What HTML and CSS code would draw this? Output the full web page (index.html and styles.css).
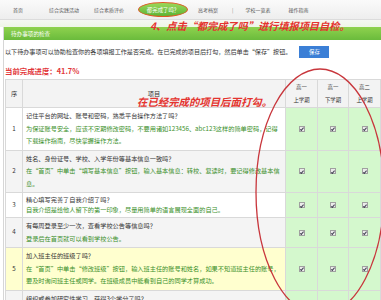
FILE: index.html
```html
<!DOCTYPE html>
<html lang="zh-CN">
<head>
<meta charset="utf-8">
<title>待办事项的检查</title>
<link rel="stylesheet" href="styles.css">
</head>
<body>
<div class="page">
  <nav class="nav">
    <a class="tab t1">首页</a>
    <a class="tab t2">综合实践活动</a>
    <a class="tab t3">综合素质评价</a>
    <a class="tab t4 active">都完成了吗？</a>
    <a class="tab t5">高考档案</a>
    <span class="tab t6">|</span>
    <a class="tab t7">学校一览表</a>
    <a class="tab t8">操作指南</a>
  </nav>
  <div class="band"></div>
  <section class="panel">
    <div class="panel-head">待办事项的检查</div>
    <div class="intro">
      <span>以下待办事项可以协助检查你的各项填报工作是否完成。在已完成的项目后打勾，然后单击“保存”按钮。</span>
      <button class="btn">保存</button>
    </div>
    <div class="progress">当前完成进度：41.7%</div>
    <table class="todo">
      <colgroup>
        <col class="c-no"><col class="c-item"><col class="c-chk"><col class="c-chk2"><col class="c-chk">
      </colgroup>
      <thead>
        <tr>
          <th>序</th>
          <th>项目</th>
          <th class="h-chk">高一<br>上学期</th>
          <th class="h-chk">高一<br>下学期</th>
          <th class="h-chk">高二<br>上学期</th>
        </tr>
      </thead>
      <tbody>
        <tr class="odd">
          <td class="no">1</td>
          <td class="item"><div class="q">记住平台的网址、账号和密码，熟悉平台操作方法了吗？</div><div class="a">为保证账号安全，应该不定期修改密码，不要用诸如123456、abc123这样的简单密码，记得<br>下载操作指南，尽快掌握操作方法。</div></td>
          <td class="chk"><span class="cb"></span></td>
          <td class="chk"><span class="cb"></span></td>
          <td class="chk"><span class="cb"></span></td>
        </tr>
        <tr class="even">
          <td class="no">2</td>
          <td class="item"><div class="q">姓名、身份证号、学校、入学年份等基本信息一致吗？</div><div class="a">在“首页”中单击“填写基本信息”按钮，输入基本信息：转校、复读时，要记得修改基本信<br>息。</div></td>
          <td class="chk"><span class="cb"></span></td>
          <td class="chk"><span class="cb"></span></td>
          <td class="chk"><span class="cb"></span></td>
        </tr>
        <tr class="odd compact">
          <td class="no">3</td>
          <td class="item"><div class="q">精心填写完善了自我介绍了吗？</div><div class="a">自我介绍是给他人留下的第一印象，尽量用简单的语言展现全面的自己。</div></td>
          <td class="chk"><span class="cb"></span></td>
          <td class="chk"><span class="cb"></span></td>
          <td class="chk"><span class="cb"></span></td>
        </tr>
        <tr class="even">
          <td class="no">4</td>
          <td class="item"><div class="q">有每周登录至少一次，查看学校公告等信息吗？</div><div class="a">登录后在首页就可以看到学校公告。</div></td>
          <td class="chk"><span class="cb"></span></td>
          <td class="chk"><span class="cb"></span></td>
          <td class="chk"><span class="cb"></span></td>
        </tr>
        <tr class="hover">
          <td class="no">5</td>
          <td class="item"><div class="q">加入班主任的班级了吗？</div><div class="a">在“首页”中单击“修改班级”按钮，输入班主任的账号和姓名，如果不知道班主任的账号，<br>要及时询问班主任或同学。在班级成员中能看到自己的同学才算成功。</div></td>
          <td class="chk"><span class="cb"></span></td>
          <td class="chk"><span class="cb"></span></td>
          <td class="chk"><span class="cb"></span></td>
        </tr>
        <tr class="even">
          <td class="no">6</td>
          <td class="item"><div class="q">组织或参加研究性学习，获得3个学分了吗？</div><div class="a">在“综合实践活动”中填写研究性学习的课题和成果。</div></td>
          <td class="chk"><span class="cb"></span></td>
          <td class="chk"><span class="cb"></span></td>
          <td class="chk"><span class="cb"></span></td>
        </tr>
      </tbody>
    </table>
  </section>
  <div class="anno anno-1">4、点击“都完成了吗”进行填报项目自检。</div>
  <div class="anno anno-2">在已经完成的项目后面打勾。</div>
  <svg class="ring" width="381" height="300" viewBox="0 0 381 300">
    <ellipse cx="320" cy="192" rx="64" ry="123" fill="none" stroke="#c8363c" stroke-width="1.3"/>
  </svg>
</div>
</body>
</html>
```

FILE: styles.css
```css
* { box-sizing: border-box; }
html, body { margin: 0; padding: 0; background: #fff; }
body { font-family: "Noto Sans CJK SC", "Noto Sans", sans-serif; color: #333; overflow: hidden; }
.page { position: relative; width: 381px; height: 300px; overflow: hidden; }

.nav {
  height: 20px;
  display: flex;
  align-items: center;
  background: linear-gradient(#fafafa, #eeeeee);
  border-bottom: 1px solid #dcdcdc;
  font-size: 5px;
  color: #555;
}
.tab { white-space: nowrap; line-height: 8px; }
.t1 { margin-left: 13px; }
.t2 { margin-left: 26px; }
.t3 { margin-left: 15px; }
.t4 {
  margin-left: 14px;
  width: 50px; height: 15px;
  display: flex; align-items: center; justify-content: center;
  border-radius: 50%;
  border: 1px solid #de5a26;
  background: linear-gradient(#9bd85a, #5cb435);
  color: #fff;
  font-size: 5.4px;
}
.t5 { margin-left: 10px; }
.t6 { margin-left: 14px; color: #888; }
.t7 { margin-left: 12px; }
.t8 { margin-left: 18px; }

.band { height: 7px; background: linear-gradient(#f6f8f3, #eef6e6); }

.panel { margin-left: 3px; border-left: 1px solid #d6d6d6; }
.panel-head {
  height: 13px;
  padding-left: 7px;
  display: flex; align-items: center;
  background: linear-gradient(#8fd24e, #6abb3c);
  color: #fff;
  font-size: 5.6px;
}
.intro {
  height: 23px;
  padding-left: 1px;
  display: flex; align-items: center;
  font-size: 6.1px;
  white-space: nowrap;
}
.btn {
  margin-left: 8px;
  width: 30px; height: 12px;
  padding: 0;
  border: 0;
  background: #3b7fd6;
  color: #fff;
  font-family: inherit;
  font-size: 5.4px;
}
.progress {
  height: 14px;
  padding-left: 1px;
  margin-bottom: 2px;
  display: flex; align-items: center;
  color: #e2373a;
  font-weight: bold;
  font-size: 7.4px;
}

.todo {
  margin-left: 1px;
  width: 375px;
  table-layout: fixed;
  border-collapse: collapse;
  font-size: 6.2px;
}
.c-no { width: 17px; }
.c-item { width: 263px; }
.c-chk { width: 32px; }
.c-chk2 { width: 31px; }
.todo th, .todo td { border: 1px solid #d9d9d9; padding: 2px 3px; }
.todo th { background: #f3f3f3; font-weight: normal; height: 28px; color: #333; }
.todo th.h-chk { font-size: 5.4px; line-height: 13px; padding: 0; }
.todo td { line-height: 12.5px; vertical-align: middle; }
.todo td.no { text-align: center; padding: 0; }
.item { white-space: nowrap; overflow: hidden; }
.q { color: #333; }
.a { color: #3a8f2a; }
.compact td { line-height: 10px; }
.odd td { background: #fff; }
.even td { background: #f4f4f4; }
.hover td { background: #ffffcf; }
.todo td.chk { background: #d4f8cd; text-align: center; padding: 0; }
.cb {
  display: inline-block;
  width: 6px; height: 6px;
  border: 1px solid #a0a0a0;
  background: #ececec;
  position: relative;
  vertical-align: middle;
}
.cb::after {
  content: "";
  position: absolute;
  left: 1.2px; top: 0.2px;
  width: 1.4px; height: 2.6px;
  border-right: 1px solid #445;
  border-bottom: 1px solid #445;
  transform: rotate(40deg);
}

.anno {
  position: absolute;
  color: #e4332f;
  font-style: italic;
  font-weight: bold;
  white-space: nowrap;
  line-height: 1;
}
.anno-1 { left: 150px; top: 21px; font-size: 10.2px; }
.anno-2 { left: 137px; top: 97px; font-size: 10.4px; }
.ring { position: absolute; left: 0; top: 0; pointer-events: none; }
```
